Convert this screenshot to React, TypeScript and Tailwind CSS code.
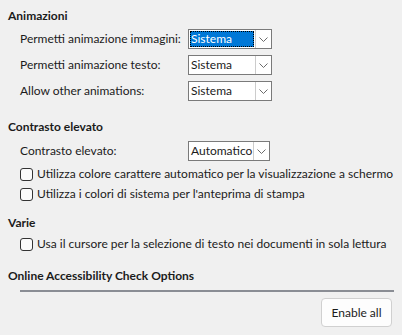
function Chevron() {
  return (
    <svg width="9" height="5" viewBox="0 0 9 5" className="text-[#6b6b6b]">
      <path d="M0.5 0.5 L4.5 4.5 L8.5 0.5" fill="none" stroke="currentColor" strokeWidth="1" />
    </svg>
  )
}

function Combo({ value, width, focused = false }: { value: string; width: string; focused?: boolean }) {
  return (
    <div className={`flex h-[20px] shrink-0 ${width} border border-[#7a7a7a] bg-white`}>
      <div className="flex min-w-0 flex-1 p-px">
        {focused ? (
          <div className="flex flex-1 items-center border border-dotted border-black bg-[#0078d7] text-white">
            {value}
          </div>
        ) : (
          <div className="flex flex-1 items-center pl-px">{value}</div>
        )}
      </div>
      <div className="flex w-[16px] items-center justify-center border-l border-[#cccccc]">
        <Chevron />
      </div>
    </div>
  )
}

function ComboRow({ label, value, width, focused }: { label: string; value: string; width: string; focused?: boolean }) {
  return (
    <div className="flex shrink-0 items-center pl-3">
      <span className="w-[168px] shrink-0 whitespace-nowrap">{label}</span>
      <Combo value={value} width={width} focused={focused} />
    </div>
  )
}

function Check({ label }: { label: string }) {
  return (
    <div className="flex h-[20px] shrink-0 items-center gap-[4px] pl-3">
      <span className="h-[13px] w-[13px] shrink-0 rounded-[3px] border border-[#333333] bg-[#fbfbfb]" />
      <span className="whitespace-nowrap">{label}</span>
    </div>
  )
}

function Heading({ children, className = '' }: { children: string; className?: string }) {
  return <div className={`h-4 shrink-0 font-bold leading-4 ${className}`}>{children}</div>
}

export default function App() {
  return (
    <div className="flex h-[335px] w-[402px] flex-col overflow-hidden bg-[#f0f0f0] pl-2 pr-[10px] pt-2 font-['Lato',sans-serif] text-[12px] leading-4 text-[#1b1b1b]">
      <Heading>Animazioni</Heading>
      <div className="mt-[5px] flex shrink-0 flex-col gap-[6px]">
        <ComboRow label="Permetti animazione immagini:" value="Sistema" width="w-[84px]" focused />
        <ComboRow label="Permetti animazione testo:" value="Sistema" width="w-[84px]" />
        <ComboRow label="Allow other animations:" value="Sistema" width="w-[84px]" />
      </div>

      <Heading className="mt-[18px]">Contrasto elevato</Heading>
      <div className="mt-[6px] shrink-0">
        <ComboRow label="Contrasto elevato:" value="Automatico" width="w-[82px]" />
      </div>
      <div className="mt-[3px] flex shrink-0 flex-col">
        <Check label="Utilizza colore carattere automatico per la visualizzazione a schermo" />
        <Check label="Utilizza i colori di sistema per l'anteprima di stampa" />
      </div>

      <Heading className="mt-[11px]">Varie</Heading>
      <div className="mt-[3px] shrink-0">
        <Check label="Usa il cursore per la selezione di testo nei documenti in sola lettura" />
      </div>

      <Heading className="mt-[14px]">Online Accessibility Check Options</Heading>
      <div className="ml-3 mr-[-2px] mt-[6px] h-[2px] shrink-0 bg-[#8a8d94]" />
      <div className="mt-[6px] flex shrink-0 justify-end">
        <button
          type="button"
          className="h-[29px] w-[71px] rounded-[4px] border border-[#d0d0d0] bg-[#fdfdfd] text-[12px] text-[#1b1b1b]"
        >
          Enable all
        </button>
      </div>
    </div>
  )
}
